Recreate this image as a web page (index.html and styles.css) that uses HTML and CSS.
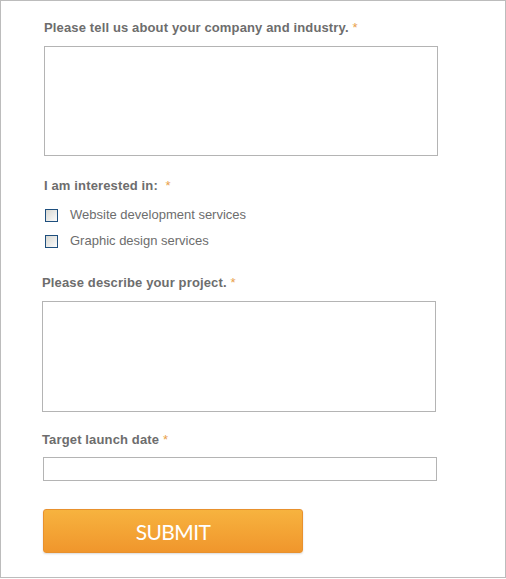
FILE: index.html
```html
<!DOCTYPE html>
<html lang="en">
<head>
    <meta charset="UTF-8">
    <meta name="viewport" content="width=device-width, initial-scale=1.0">
    <title>Project Request Form</title>
    <link rel="stylesheet" href="styles.css">
</head>
<body>

    <!-- Project request form -->
    <form class="form-frame">
        <div class="field field-company">
            <label class="field-label" for="company">Please tell us about your company and industry. <span class="required">*</span></label>
            <textarea id="company" class="text-box"></textarea>
        </div>

        <div class="field field-interest">
            <div class="field-label">I am interested in:&nbsp; <span class="required">*</span></div>
            <label class="check-row"><input type="checkbox" class="check"> Website development services</label>
            <label class="check-row"><input type="checkbox" class="check"> Graphic design services</label>
        </div>

        <div class="field field-project">
            <label class="field-label" for="project">Please describe your project. <span class="required">*</span></label>
            <textarea id="project" class="text-box text-box-tall"></textarea>
        </div>

        <div class="field field-date">
            <label class="field-label" for="launch">Target launch date <span class="required">*</span></label>
            <input type="text" id="launch" class="text-input">
        </div>

        <button type="button" class="submit-btn">SUBMIT</button>
    </form>

</body>
</html>
```

FILE: styles.css
```css
/* Reset */
* {
    margin: 0;
    padding: 0;
    box-sizing: border-box;
}

body {
    font-family: "Liberation Sans", Arial, Helvetica, sans-serif;
    background-color: #fff;
    color: #6d6d6d;
}

/* Outer frame */
.form-frame {
    width: 506px;
    height: 578px;
    border: 1px solid #bcbcbc;
    padding: 19px 0 24px 0;
}

.field-label {
    display: block;
    font-size: 13px;
    font-weight: bold;
    line-height: 16px;
    letter-spacing: 0.14px;
    color: #6d6d6d;
}

.required {
    color: #e9a04a;
    font-weight: normal;
}

.field-company {
    margin-left: 43px;
}

.field-interest {
    margin-top: 22px;
    margin-left: 43px;
}

.field-project {
    margin-top: 26px;
    margin-left: 41px;
}

.field-date {
    margin-top: 20px;
    margin-left: 41px;
}

/* Text areas and inputs */
.text-box {
    display: block;
    width: 394px;
    height: 110px;
    margin-top: 10px;
    border: 1px solid #b4b4b4;
    resize: none;
    font-family: inherit;
    background: #fff;
}

.text-box-tall {
    height: 111px;
}

.field-project .text-box-tall {
    margin-top: 10px;
}

.text-input {
    display: block;
    width: 394px;
    height: 24px;
    margin-top: 9px;
    margin-left: 1px;
    border: 1px solid #b4b4b4;
    font-family: inherit;
    background: #fff;
}

/* Checkbox rows */
.check-row {
    display: flex;
    align-items: center;
    gap: 12px;
    height: 16px;
    font-size: 13px;
    line-height: 16px;
    color: #6d6d6d;
    margin-top: 13px;
}

.check-row + .check-row {
    margin-top: 10px;
}

.check {
    appearance: none;
    -webkit-appearance: none;
    width: 13px;
    height: 13px;
    margin: 1px 0 0 1px;
    border: 1px solid #1e4f7e;
    background: linear-gradient(135deg, #d8d8d2, #fbfbfb);
}

/* Submit button */
.submit-btn {
    display: block;
    width: 260px;
    height: 44px;
    margin: 28px 0 0 42px;
    border: 1px solid #e8912e;
    border-radius: 3px;
    background: linear-gradient(to bottom, #f7b33f, #f0962c);
    box-shadow: 0 1px 2px rgba(0, 0, 0, 0.15);
    color: #fff;
    font-family: Lato, "Open Sans", sans-serif;
    font-size: 21px;
    letter-spacing: -0.6px;
    cursor: pointer;
}
```
